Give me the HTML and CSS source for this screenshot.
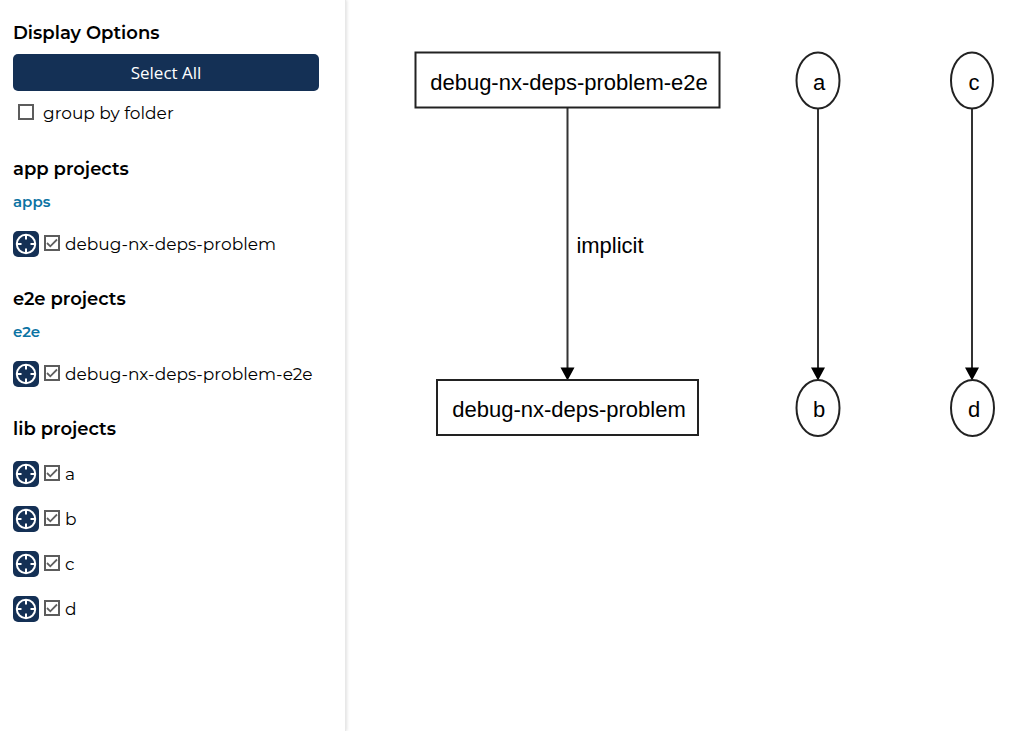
FILE: index.html
```html
<!DOCTYPE html>
<html lang="en">
<head>
<meta charset="utf-8">
<title>Dependency Graph</title>
<link rel="stylesheet" href="styles.css">
</head>
<body>
<svg class="defs" aria-hidden="true">
  <symbol id="focus" viewBox="0 0 26 26">
    <circle cx="13" cy="13" r="9.2"/>
    <path d="M13 3.5v5M13 17.5v5M3.5 13h5M17.5 13h5"/>
  </symbol>
</svg>
<div class="app">
  <aside class="sidebar">
    <section class="group">
      <h2 class="heading">Display Options</h2>
      <button class="select-all" type="button">Select All</button>
      <div class="option">
        <input class="check" type="checkbox" id="by-folder">
        <label for="by-folder">group by folder</label>
      </div>
    </section>
    <section class="group">
      <h2 class="heading">app projects</h2>
      <h3 class="folder">apps</h3>
      <ul class="projects">
        <li class="project">
          <button class="focus" type="button" aria-label="Focus debug-nx-deps-problem"><svg><use href="#focus"/></svg></button>
          <input class="check" type="checkbox" id="p-app" checked>
          <label for="p-app">debug-nx-deps-problem</label>
        </li>
      </ul>
    </section>
    <section class="group">
      <h2 class="heading">e2e projects</h2>
      <h3 class="folder">e2e</h3>
      <ul class="projects">
        <li class="project">
          <button class="focus" type="button" aria-label="Focus debug-nx-deps-problem-e2e"><svg><use href="#focus"/></svg></button>
          <input class="check" type="checkbox" id="p-e2e" checked>
          <label for="p-e2e">debug-nx-deps-problem-e2e</label>
        </li>
      </ul>
    </section>
    <section class="group">
      <h2 class="heading">lib projects</h2>
      <ul class="projects">
        <li class="project">
          <button class="focus" type="button" aria-label="Focus a"><svg><use href="#focus"/></svg></button>
          <input class="check" type="checkbox" id="p-a" checked>
          <label for="p-a">a</label>
        </li>
        <li class="project">
          <button class="focus" type="button" aria-label="Focus b"><svg><use href="#focus"/></svg></button>
          <input class="check" type="checkbox" id="p-b" checked>
          <label for="p-b">b</label>
        </li>
        <li class="project">
          <button class="focus" type="button" aria-label="Focus c"><svg><use href="#focus"/></svg></button>
          <input class="check" type="checkbox" id="p-c" checked>
          <label for="p-c">c</label>
        </li>
        <li class="project">
          <button class="focus" type="button" aria-label="Focus d"><svg><use href="#focus"/></svg></button>
          <input class="check" type="checkbox" id="p-d" checked>
          <label for="p-d">d</label>
        </li>
      </ul>
    </section>
  </aside>
  <main class="canvas">
    <svg class="graph" width="660" height="460" viewBox="0 0 660 460" role="img" aria-label="Project dependency graph">
      <g class="edge">
        <path d="M221.5 108V368M472 108V368M626 108V368"/>
      </g>
      <g class="arrow">
        <path d="M214.5 367.500h14l-7 13zM465 367.500h14l-7 13zM619 367.500h14l-7 13z"/>
      </g>
      <g class="node">
        <rect x="69.500" y="52.500" width="304" height="55"/>
        <rect x="91" y="380" width="261" height="55"/>
        <ellipse cx="472" cy="80.500" rx="21.500" ry="28"/>
        <ellipse cx="626" cy="80.500" rx="21" ry="28"/>
        <ellipse cx="472" cy="408" rx="21.500" ry="28"/>
        <ellipse cx="626.500" cy="408" rx="21.500" ry="28"/>
      </g>
      <g class="caption">
        <text x="223" y="90">debug-nx-deps-problem-e2e</text>
        <text x="223" y="417">debug-nx-deps-problem</text>
        <text x="264" y="253">implicit</text>
        <text x="473" y="90">a</text>
        <text x="473" y="417">b</text>
        <text x="628" y="90">c</text>
        <text x="628" y="417">d</text>
      </g>
    </svg>
  </main>
</div>
</body>
</html>
```

FILE: styles.css
```css
* {
  box-sizing: border-box;
}

body {
  margin: 0;
  background: #fff;
  color: #000;
  font-family: Montserrat, Inter, sans-serif;
  font-size: 17px;
  line-height: 24px;
}

.defs {
  display: none;
}

.app {
  display: flex;
  min-height: 100vh;
}

.sidebar {
  flex: none;
  display: flex;
  flex-direction: column;
  gap: 20px;
  min-width: 346px;
  padding: 20px 26px 20px 13px;
  border-right: 1px solid #e8e8e8;
  box-shadow: 1px 0 3px rgba(0, 0, 0, 0.12);
}

.group:first-child {
  padding-bottom: 11px;
}

.heading {
  margin: 0;
  font-size: 18px;
  font-weight: 600;
  line-height: 26px;
}

.select-all {
  display: block;
  width: 100%;
  margin: 8px 0 10px;
  padding: 6px;
  border: 0;
  border-radius: 5px;
  background: #143055;
  color: #fff;
  font-family: "Open Sans", sans-serif;
  font-size: 17px;
  line-height: 25px;
}

.option {
  display: flex;
  align-items: center;
  gap: 8px;
  padding-left: 4px;
}

.folder {
  margin: 8px 0 0;
  color: #0b73a3;
  font-size: 15px;
  font-weight: 600;
  line-height: 24px;
}

.projects {
  margin: 9px 0 0;
  padding: 0;
  list-style: none;
}

.folder + .projects {
  margin-top: 7px;
}

.project {
  display: flex;
  align-items: center;
  gap: 4px;
  height: 45px;
}

.focus {
  width: 26px;
  height: 26px;
  padding: 0;
  border: 0;
  border-radius: 5px;
  background: #143055;
}

.focus svg {
  display: block;
  width: 26px;
  height: 26px;
  fill: none;
  stroke: #fff;
  stroke-width: 2;
}

.check {
  appearance: none;
  width: 16px;
  height: 16px;
  margin: 0 1px 2px;
  border: 2px solid #5c5c5c;
  background: #fff;
}

.check:checked {
  background: url("data:image/svg+xml,%3Csvg xmlns='http://www.w3.org/2000/svg' viewBox='0 0 12 12'%3E%3Cpath d='M1 6l3.300 3.300L11 2.500' fill='none' stroke='%23606060' stroke-width='1.800'/%3E%3C/svg%3E") center / 12px 12px no-repeat;
}

.canvas {
  flex: 1;
  min-width: 0;
}

.graph {
  display: block;
}

.node {
  fill: none;
  stroke: #222;
  stroke-width: 2;
}

.edge {
  fill: none;
  stroke: #333;
  stroke-width: 2;
}

.caption {
  font-family: "Liberation Sans", Arial, sans-serif;
  font-size: 22px;
  text-anchor: middle;
}
```
